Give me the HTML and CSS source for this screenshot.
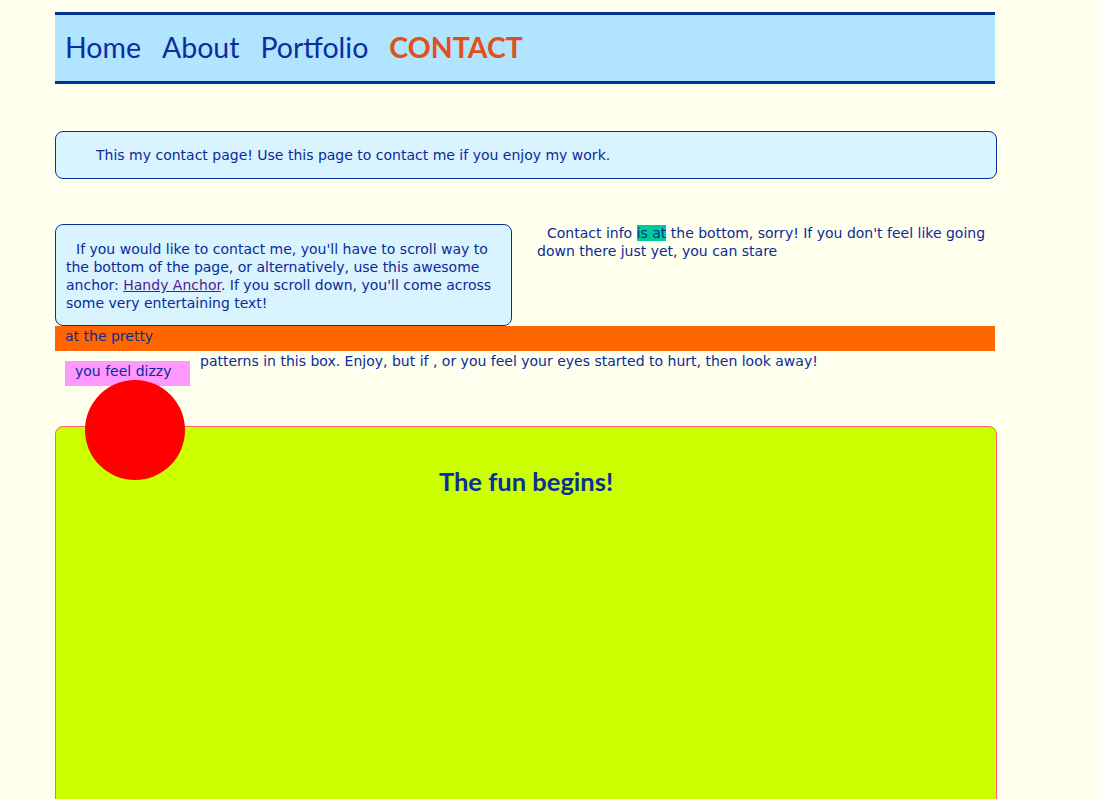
FILE: index.html
```html
<!DOCTYPE html>
<html>
<head>
<meta charset="utf-8">
<title>Contact</title>
<link rel="stylesheet" href="styles.css">
</head>
<body>
<div class="page">
  <nav class="nav">
    <a class="nav-link" href="#">Home</a>
    <a class="nav-link" href="#">About</a>
    <a class="nav-link" href="#">Portfolio</a>
    <a class="nav-link current" href="#">CONTACT</a>
  </nav>

  <div class="intro">This my contact page! Use this page to contact me if you enjoy my work.</div>

  <div class="row">
    <div class="card">If you would like to contact me, you'll have to scroll way to the bottom of the page, or alternatively, use this awesome anchor: <a class="anchor" href="#bottom">Handy Anchor</a>. If you scroll down, you'll come across some very entertaining text!</div>
    <p class="side">Contact info <span class="hl">is at</span> the bottom, sorry! If you don't feel like going down there just yet, you can stare</p>
  </div>

  <div class="bar">at the pretty</div>

  <div class="dizzy-row">
    <span class="dizzy">you feel dizzy</span>
    <span class="patterns">patterns in this box. Enjoy, but if , or you feel your eyes started to hurt, then look away!</span>
  </div>

  <div class="fun">
    <div class="circle"></div>
    <h2 class="fun-title">The fun begins!</h2>
  </div>
</div>
</body>
</html>
```

FILE: styles.css
```css
html, body {
  margin: 0;
  padding: 0;
  background: #FFFFEE;
}
body {
  color: #0B2A99;
  font-family: "DejaVu Sans", Verdana, sans-serif;
  font-size: 14px;
  line-height: 18px;
  height: 799px;
  overflow: hidden;
}
.page {
  position: relative;
  padding: 12px 0 0 55px;
  width: 942px;
}
.nav {
  height: 66px;
  width: 930px;
  box-sizing: content-box;
  background: #B0E4FF;
  border-top: 3px solid #003399;
  border-bottom: 3px solid #003399;
  display: flex;
  align-items: center;
  gap: 21px;
  padding-left: 10px;
}
.nav-link {
  font-family: Lato, "Noto Sans", sans-serif;
  font-size: 28.5px;
  line-height: 32px;
  color: #0B2E9E;
  text-decoration: none;
  padding-bottom: 2px;
}
.nav-link.current {
  color: #E0501A;
  font-weight: bold;
}
.intro {
  margin-top: 47px;
  height: 46px;
  width: 900px;
  border: 1px solid #0B2E9E;
  border-radius: 8px;
  background: #D9F3FF;
  box-sizing: content-box;
  padding: 0 0 0 40px;
  display: flex;
  align-items: center;
}
.row {
  margin-top: 45px;
  display: flex;
  align-items: flex-start;
  width: 942px;
}
.card {
  flex: 0 0 435px;
  height: 85px;
  border: 1px solid #0B2E9E;
  border-radius: 8px;
  background: #D9F3FF;
  padding: 15px 10px 0 10px;
  box-sizing: content-box;
  text-indent: 10px;
}
.anchor {
  color: #551A8B;
}
.side {
  margin: 0 0 0 25px;
  text-indent: 10px;
  width: 460px;
}
.hl {
  background: #00CC99;
}
.bar {
  width: 930px;
  height: 25px;
  background: #FF6600;
  padding-left: 10px;
  line-height: 20px;
}
.dizzy-row {
  display: flex;
  align-items: flex-start;
  height: 75px;
}
.dizzy {
  margin: 10px 0 0 10px;
  width: 115px;
  height: 25px;
  padding-left: 10px;
  background: #FF99FF;
  line-height: 21px;
}
.patterns {
  margin: 1px 0 0 10px;
}
.fun {
  position: relative;
  width: 940px;
  height: 420px;
  background: #CCFF00;
  border: 1px solid #FF6666;
  border-radius: 8px;
  box-sizing: content-box;
  padding-top: 1px;
}
.circle {
  position: absolute;
  left: 29px;
  top: -47px;
  width: 100px;
  height: 100px;
  border-radius: 50%;
  background: #FF0000;
}
.fun-title {
  margin: 38px 0 0 0;
  text-align: center;
  font-family: Lato, "Noto Sans", sans-serif;
  font-weight: bold;
  font-size: 25.5px;
  line-height: 30px;
  color: #0B2E9E;
}
```
